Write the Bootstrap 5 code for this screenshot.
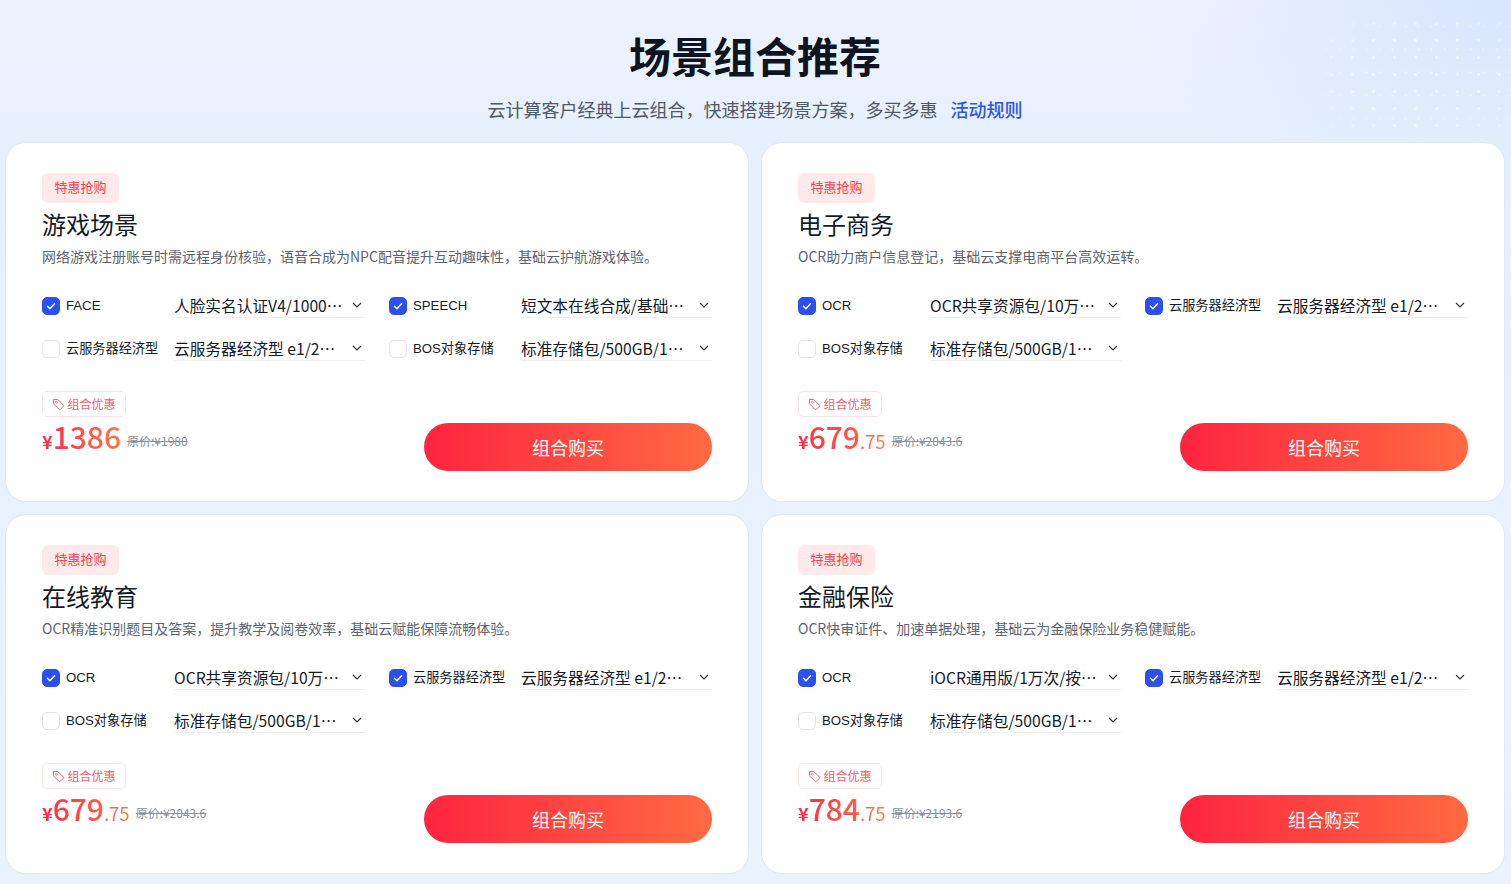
<!DOCTYPE html>
<html lang="zh-CN">
<head>
  <meta charset="UTF-8" />
  <title>场景组合推荐</title>
  <link href="https://cdn.jsdelivr.net/npm/bootstrap@5.3.0/dist/css/bootstrap.min.css" rel="stylesheet">
  <style>
    body {
      font-family: "Noto Sans CJK SC", "Liberation Sans", sans-serif;
      color: #151b26;
      min-height: 884px;
      background:
        radial-gradient(380px 220px at 100% 0, #d8e5fd 0, rgba(216,229,253,0) 100%),
        linear-gradient(180deg, #edf3fe 0, #e6f0fd 140px, #e8f3fd 100%);
    }
    .scene-page { padding: 0 7px 11px 6px; position: relative; }
    .scene-dots {
      position: absolute; top: 15px; right: 0; width: 190px; height: 125px;
      background-image:
        radial-gradient(circle, rgba(255,255,255,.55) 1.3px, transparent 1.8px),
        radial-gradient(circle, rgba(255,255,255,.35) 1px, transparent 1.5px);
      background-size: 21px 17px, 13px 23px;
      -webkit-mask-image: radial-gradient(ellipse at 55% 50%, #000 45%, transparent 100%);
      mask-image: radial-gradient(ellipse at 55% 50%, #000 45%, transparent 100%);
    }
    .scene-head { height: 143px; padding-top: 25px; position: relative; }
    .scene-title { font-size: 42px; line-height: 60px; font-weight: 700; margin: 0 0 11px; color: #0e1420; }
    .scene-sub { font-size: 18px; line-height: 26px; color: #4f5865; margin: 0; }
    .scene-sub a { color: #2f54eb; text-decoration: none; margin-left: 9px; font-weight: 500; }
    .scene-grid { display: grid; grid-template-columns: 742px 742px; gap: 14px; position: relative; }
    .scene-card {
      height: 358px; padding: 30px 36px; background: #fff; border-radius: 20px;
      box-shadow: 0 0 0 1px #dfe7f2;
    }
    .scene-tag {
      width: 77px; height: 30px; line-height: 28px; text-align: center; font-size: 13px;
      background: #ffe9ea; color: #f5434f; border-radius: 6px;
    }
    .scene-name { font-size: 24px; line-height: 36px; font-weight: 400; margin: 3px 0 3px; }
    .scene-desc { font-size: 14px; line-height: 22px; color: #5c6470; margin: 0 0 26px; }
    .scene-opts { display: grid; grid-template-columns: 323px 323px; column-gap: 24px; row-gap: 18px; }
    .scene-opt { height: 25px; }
    .scene-opt .form-check-input {
      width: 18px; height: 18px; margin: 0 6px 0 0; flex: none; border-radius: 5px;
      border-color: #dfe3ea;
    }
    .scene-opt .form-check-input:checked {
      background-color: #2b50ed; border-color: #2b50ed;
      background-image: url("data:image/svg+xml,%3csvg xmlns='http://www.w3.org/2000/svg' viewBox='0 0 18 18'%3e%3cpath fill='none' stroke='%23fff' stroke-width='1.6' stroke-linecap='round' stroke-linejoin='round' d='M5 9.3l2.8 2.7L13 6.4'/%3e%3c/svg%3e");
    }
    .scene-label {
      width: 108px; flex: none; font-size: 13.2px; white-space: nowrap; margin: 0;
      font-family: "Liberation Sans", "Noto Sans CJK SC", sans-serif;
    }
    .scene-select {
      width: 191px; height: 25px; line-height: 25px; font-size: 15.7px;
      border-bottom: 1px solid #eceef2; flex: none; white-space: nowrap;
    }
    .scene-select svg { margin-right: 3px; }
    .scene-foot { height: 80px; margin-top: auto; }
    .scene-coupon {
      height: 26px; width: 84px; border: 1px solid #fbe3e5; border-radius: 5px;
      font-size: 12px; color: #f0616d; gap: 2px;
    }
    .scene-price { height: 42px; }
    .scene-num {
      font-size: 30px; line-height: 42px; font-weight: 500;
      background: linear-gradient(90deg, #ff2a45, #ff7548);
      -webkit-background-clip: text; background-clip: text; color: transparent;
    }
    .scene-num small { font-size: 18.5px; font-weight: 400; }
    .scene-num b { font-size: 18px; font-weight: 700; }
    .scene-old { font-size: 12px; color: #8a8f99; text-decoration: line-through; margin: 6px 0 0 6px; }
    .scene-buy {
      width: 288px; height: 48px; border: 0; border-radius: 24px; color: #fff; font-size: 18px;
      background: linear-gradient(90deg, #ff2440, #ff6a42);
    }
    .scene-buy:hover { color: #fff; background: linear-gradient(90deg, #ff2440, #ff6a42); }
  </style>
</head>
<body>
  <div class="scene-page">
    <div class="scene-dots"></div>
    <header class="scene-head text-center">
      <h1 class="scene-title">场景组合推荐</h1>
      <p class="scene-sub">云计算客户经典上云组合，快速搭建场景方案，多买多惠 <a href="#">活动规则</a></p>
    </header>

    <div class="scene-grid">
      <!-- 游戏场景 -->
      <section class="scene-card d-flex flex-column">
        <div class="scene-tag">特惠抢购</div>
        <h2 class="scene-name">游戏场景</h2>
        <p class="scene-desc">网络游戏注册账号时需远程身份核验，语音合成为NPC配音提升互动趣味性，基础云护航游戏体验。</p>
        <div class="scene-opts">
          <div class="scene-opt d-flex align-items-center"><input class="form-check-input" type="checkbox" checked><label class="scene-label">FACE</label><div class="scene-select d-flex align-items-center justify-content-between"><span>人脸实名认证V4/1000⋯</span><svg width="10" height="6" viewBox="0 0 10 6"><path d="M1 1l4 4 4-4" fill="none" stroke="#333" stroke-width="1.2"/></svg></div></div>
          <div class="scene-opt d-flex align-items-center"><input class="form-check-input" type="checkbox" checked><label class="scene-label">SPEECH</label><div class="scene-select d-flex align-items-center justify-content-between"><span>短文本在线合成/基础⋯</span><svg width="10" height="6" viewBox="0 0 10 6"><path d="M1 1l4 4 4-4" fill="none" stroke="#333" stroke-width="1.2"/></svg></div></div>
          <div class="scene-opt d-flex align-items-center"><input class="form-check-input" type="checkbox"><label class="scene-label">云服务器经济型</label><div class="scene-select d-flex align-items-center justify-content-between"><span>云服务器经济型 e1/2⋯</span><svg width="10" height="6" viewBox="0 0 10 6"><path d="M1 1l4 4 4-4" fill="none" stroke="#333" stroke-width="1.2"/></svg></div></div>
          <div class="scene-opt d-flex align-items-center"><input class="form-check-input" type="checkbox"><label class="scene-label">BOS对象存储</label><div class="scene-select d-flex align-items-center justify-content-between"><span>标准存储包/500GB/1⋯</span><svg width="10" height="6" viewBox="0 0 10 6"><path d="M1 1l4 4 4-4" fill="none" stroke="#333" stroke-width="1.2"/></svg></div></div>
        </div>
        <div class="scene-foot d-flex justify-content-between align-items-end">
          <div class="align-self-start">
            <div class="scene-coupon d-flex align-items-center justify-content-center"><svg width="13" height="13" viewBox="0 0 13 13"><path d="M1.500 1.500h4.300l5.500 5.500a1 1 0 0 1 0 1.400l-2.900 2.900a1 1 0 0 1-1.400 0L1.500 5.800z" fill="none" stroke="#f0616d" stroke-linejoin="round"/><circle cx="4.300" cy="4.300" r="1" fill="none" stroke="#f0616d" stroke-width=".8"/></svg>组合优惠</div>
            <div class="scene-price d-flex align-items-center"><span class="scene-num"><b>¥</b>1386</span><span class="scene-old">原价:¥1980</span></div>
          </div>
          <button class="btn scene-buy p-0" type="button">组合购买</button>
        </div>
      </section>

      <!-- 电子商务 -->
      <section class="scene-card d-flex flex-column">
        <div class="scene-tag">特惠抢购</div>
        <h2 class="scene-name">电子商务</h2>
        <p class="scene-desc">OCR助力商户信息登记，基础云支撑电商平台高效运转。</p>
        <div class="scene-opts">
          <div class="scene-opt d-flex align-items-center"><input class="form-check-input" type="checkbox" checked><label class="scene-label">OCR</label><div class="scene-select d-flex align-items-center justify-content-between"><span>OCR共享资源包/10万⋯</span><svg width="10" height="6" viewBox="0 0 10 6"><path d="M1 1l4 4 4-4" fill="none" stroke="#333" stroke-width="1.2"/></svg></div></div>
          <div class="scene-opt d-flex align-items-center"><input class="form-check-input" type="checkbox" checked><label class="scene-label">云服务器经济型</label><div class="scene-select d-flex align-items-center justify-content-between"><span>云服务器经济型 e1/2⋯</span><svg width="10" height="6" viewBox="0 0 10 6"><path d="M1 1l4 4 4-4" fill="none" stroke="#333" stroke-width="1.2"/></svg></div></div>
          <div class="scene-opt d-flex align-items-center"><input class="form-check-input" type="checkbox"><label class="scene-label">BOS对象存储</label><div class="scene-select d-flex align-items-center justify-content-between"><span>标准存储包/500GB/1⋯</span><svg width="10" height="6" viewBox="0 0 10 6"><path d="M1 1l4 4 4-4" fill="none" stroke="#333" stroke-width="1.2"/></svg></div></div>
        </div>
        <div class="scene-foot d-flex justify-content-between align-items-end">
          <div class="align-self-start">
            <div class="scene-coupon d-flex align-items-center justify-content-center"><svg width="13" height="13" viewBox="0 0 13 13"><path d="M1.500 1.500h4.300l5.500 5.500a1 1 0 0 1 0 1.400l-2.900 2.900a1 1 0 0 1-1.400 0L1.500 5.800z" fill="none" stroke="#f0616d" stroke-linejoin="round"/><circle cx="4.300" cy="4.300" r="1" fill="none" stroke="#f0616d" stroke-width=".8"/></svg>组合优惠</div>
            <div class="scene-price d-flex align-items-center"><span class="scene-num"><b>¥</b>679<small>.75</small></span><span class="scene-old">原价:¥2043.6</span></div>
          </div>
          <button class="btn scene-buy p-0" type="button">组合购买</button>
        </div>
      </section>

      <!-- 在线教育 -->
      <section class="scene-card d-flex flex-column">
        <div class="scene-tag">特惠抢购</div>
        <h2 class="scene-name">在线教育</h2>
        <p class="scene-desc">OCR精准识别题目及答案，提升教学及阅卷效率，基础云赋能保障流畅体验。</p>
        <div class="scene-opts">
          <div class="scene-opt d-flex align-items-center"><input class="form-check-input" type="checkbox" checked><label class="scene-label">OCR</label><div class="scene-select d-flex align-items-center justify-content-between"><span>OCR共享资源包/10万⋯</span><svg width="10" height="6" viewBox="0 0 10 6"><path d="M1 1l4 4 4-4" fill="none" stroke="#333" stroke-width="1.2"/></svg></div></div>
          <div class="scene-opt d-flex align-items-center"><input class="form-check-input" type="checkbox" checked><label class="scene-label">云服务器经济型</label><div class="scene-select d-flex align-items-center justify-content-between"><span>云服务器经济型 e1/2⋯</span><svg width="10" height="6" viewBox="0 0 10 6"><path d="M1 1l4 4 4-4" fill="none" stroke="#333" stroke-width="1.2"/></svg></div></div>
          <div class="scene-opt d-flex align-items-center"><input class="form-check-input" type="checkbox"><label class="scene-label">BOS对象存储</label><div class="scene-select d-flex align-items-center justify-content-between"><span>标准存储包/500GB/1⋯</span><svg width="10" height="6" viewBox="0 0 10 6"><path d="M1 1l4 4 4-4" fill="none" stroke="#333" stroke-width="1.2"/></svg></div></div>
        </div>
        <div class="scene-foot d-flex justify-content-between align-items-end">
          <div class="align-self-start">
            <div class="scene-coupon d-flex align-items-center justify-content-center"><svg width="13" height="13" viewBox="0 0 13 13"><path d="M1.500 1.500h4.300l5.500 5.500a1 1 0 0 1 0 1.400l-2.900 2.900a1 1 0 0 1-1.400 0L1.500 5.800z" fill="none" stroke="#f0616d" stroke-linejoin="round"/><circle cx="4.300" cy="4.300" r="1" fill="none" stroke="#f0616d" stroke-width=".8"/></svg>组合优惠</div>
            <div class="scene-price d-flex align-items-center"><span class="scene-num"><b>¥</b>679<small>.75</small></span><span class="scene-old">原价:¥2043.6</span></div>
          </div>
          <button class="btn scene-buy p-0" type="button">组合购买</button>
        </div>
      </section>

      <!-- 金融保险 -->
      <section class="scene-card d-flex flex-column">
        <div class="scene-tag">特惠抢购</div>
        <h2 class="scene-name">金融保险</h2>
        <p class="scene-desc">OCR快审证件、加速单据处理，基础云为金融保险业务稳健赋能。</p>
        <div class="scene-opts">
          <div class="scene-opt d-flex align-items-center"><input class="form-check-input" type="checkbox" checked><label class="scene-label">OCR</label><div class="scene-select d-flex align-items-center justify-content-between"><span>iOCR通用版/1万次/按⋯</span><svg width="10" height="6" viewBox="0 0 10 6"><path d="M1 1l4 4 4-4" fill="none" stroke="#333" stroke-width="1.2"/></svg></div></div>
          <div class="scene-opt d-flex align-items-center"><input class="form-check-input" type="checkbox" checked><label class="scene-label">云服务器经济型</label><div class="scene-select d-flex align-items-center justify-content-between"><span>云服务器经济型 e1/2⋯</span><svg width="10" height="6" viewBox="0 0 10 6"><path d="M1 1l4 4 4-4" fill="none" stroke="#333" stroke-width="1.2"/></svg></div></div>
          <div class="scene-opt d-flex align-items-center"><input class="form-check-input" type="checkbox"><label class="scene-label">BOS对象存储</label><div class="scene-select d-flex align-items-center justify-content-between"><span>标准存储包/500GB/1⋯</span><svg width="10" height="6" viewBox="0 0 10 6"><path d="M1 1l4 4 4-4" fill="none" stroke="#333" stroke-width="1.2"/></svg></div></div>
        </div>
        <div class="scene-foot d-flex justify-content-between align-items-end">
          <div class="align-self-start">
            <div class="scene-coupon d-flex align-items-center justify-content-center"><svg width="13" height="13" viewBox="0 0 13 13"><path d="M1.500 1.500h4.300l5.500 5.500a1 1 0 0 1 0 1.400l-2.900 2.900a1 1 0 0 1-1.400 0L1.500 5.800z" fill="none" stroke="#f0616d" stroke-linejoin="round"/><circle cx="4.300" cy="4.300" r="1" fill="none" stroke="#f0616d" stroke-width=".8"/></svg>组合优惠</div>
            <div class="scene-price d-flex align-items-center"><span class="scene-num"><b>¥</b>784<small>.75</small></span><span class="scene-old">原价:¥2193.6</span></div>
          </div>
          <button class="btn scene-buy p-0" type="button">组合购买</button>
        </div>
      </section>
    </div>
  </div>
  <script src="https://cdn.jsdelivr.net/npm/bootstrap@5.3.0/dist/js/bootstrap.bundle.min.js"></script>
</body>
</html>
